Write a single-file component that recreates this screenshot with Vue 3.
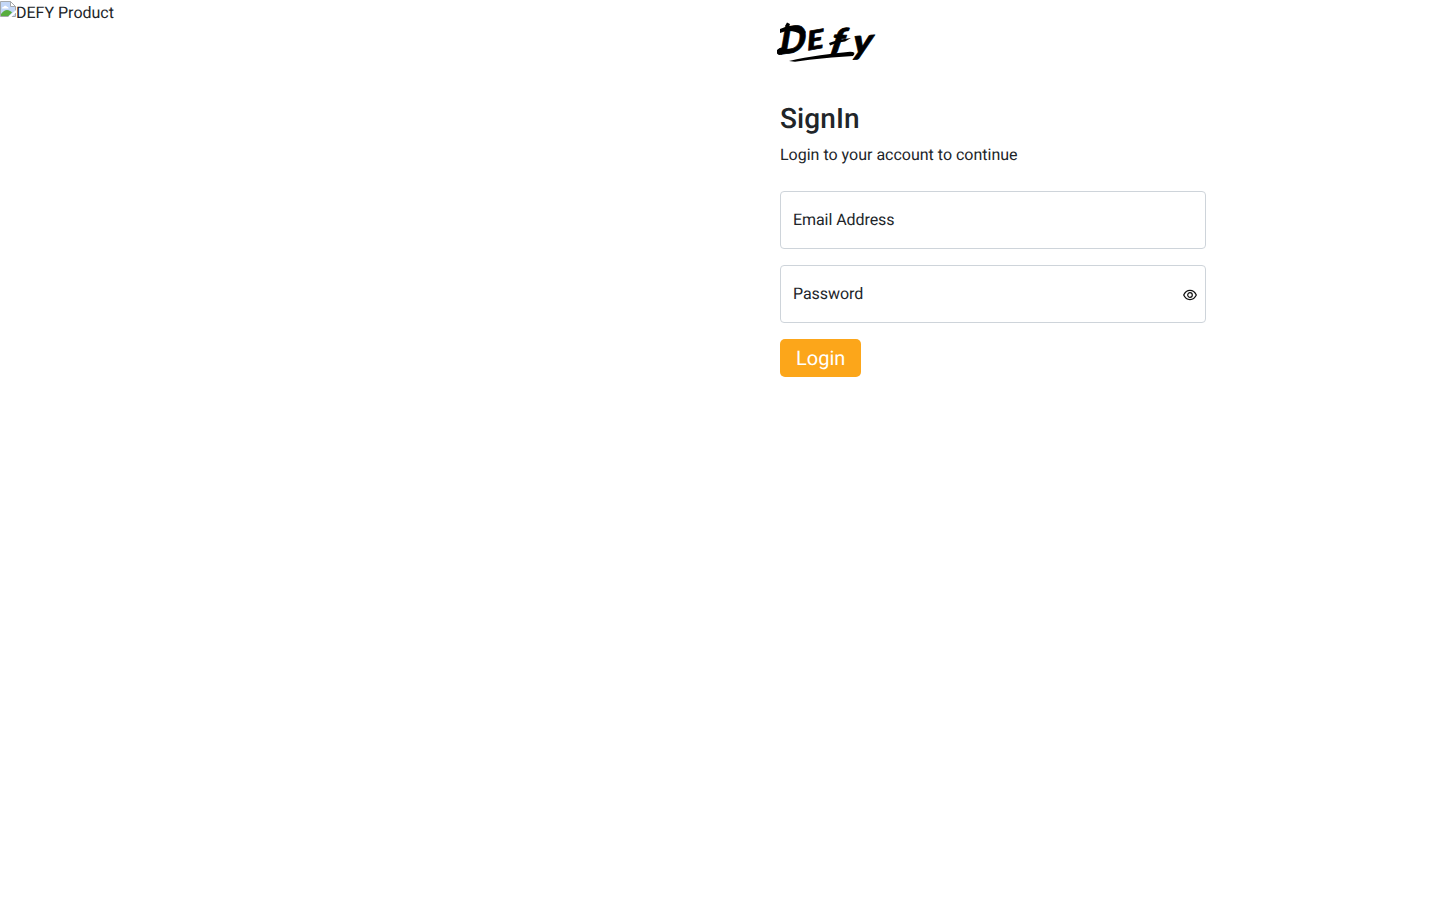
<script setup>
import { ref } from 'vue'

const email = ref('')
const password = ref('')
const visible = ref(false)
</script>

<template>
  <main class="page">
    <section class="product">
      <svg class="picture" width="16" height="16" viewBox="0 0 16 16" aria-hidden="true">
        <path d="M.5 15.5V.5h10l5 5v10z" fill="#c3d7f7" stroke="#a5a8ab" />
        <path d="M2 7.500c0-1.200 1-1.800 1.800-1.600C4.100 4.500 6.500 4.300 7 6c1.200-.1 1.600.6 1.600 1.500z" fill="#fff" />
        <path d="M1 15v-2c2-2.500 4-4 6-4s4.500 1.500 5 2.500L8.500 15z" fill="#58ad3e" />
        <path d="M8 16l8-7v2.500L11.500 16z" fill="#fff" />
        <path d="M10.500.5v5h5z" fill="#fff" stroke="#a5a8ab" />
      </svg><span>DEFY Product</span>
    </section>
    <section class="panel">
      <svg class="logo" width="104" height="44" viewBox="0 0 104 44" role="img" aria-label="DEFY">
        <g class="brush">
          <text transform="translate(4.500 34.500) rotate(-7) skewX(-10) scale(1 1)" font-size="37">D</text>
          <text transform="translate(32.500 30.500) rotate(-10) skewX(-6) scale(1.220 1)" font-size="26">E</text>
          <text transform="translate(55 31.500) rotate(2) skewX(-8) scale(1.180 1)" font-size="33">f</text>
          <text transform="translate(77 34) rotate(-4) skewX(-10) scale(1.180 1)" font-size="34">y</text>
        </g>
        <path d="M14 41C34 36 57 33.500 75 31.700q7 0 3 4.300C60 37 39 39 20 41.800z" />
        <path d="M2 30q3-3.500 8-2.500l-1 5q-4 4.500-7 1zM5 9Q18 2.500 31 12L27 15Q16 8 5 13zM10 6l2-3.500 3 1.500-2 6z" />
        <path d="M54 23q8-3.500 22-5l-6 3.500q-8 .5-15 4z" />
      </svg>
      <h1>SignIn</h1>
      <p>Login to your account to continue</p>
      <form @submit.prevent>
        <label class="field">
          <input v-model="email" type="email" autocomplete="off">
          <span v-if="!email">Email Address</span>
        </label>
        <label class="field">
          <input v-model="password" :type="visible ? 'text' : 'password'" autocomplete="off">
          <span v-if="!password">Password</span>
          <button class="eye" type="button" aria-label="Toggle password" @click="visible = !visible">
            <svg width="14" height="12" viewBox="0 0 14 12" fill="none" stroke="#111" stroke-width="1.200">
              <path d="M.7 6C3.500-.1 10.500-.1 13.300 6 10.500 12.100 3.500 12.100.7 6z" />
              <circle cx="7" cy="6" r="2.300" />
            </svg>
          </button>
        </label>
        <button class="login" type="submit">Login</button>
      </form>
    </section>
  </main>
</template>

<style>
body { margin: 0; background: #fff; }
</style>

<style scoped>
* { box-sizing: border-box; }
.page {
  display: grid;
  grid-template-columns: 1fr 1fr;
  min-height: 900px;
  color: #212529;
  font: 400 16px/24px Roboto, sans-serif;
  text-rendering: geometricPrecision;
}
.product { display: flex; align-items: flex-start; }
.product span { padding-top: 1px; }
.picture { margin-top: 1px; }
.panel { padding: 20px 60px; }
.logo { display: block; margin-left: -5px; fill: #000; overflow: visible; }
.brush {
  font-family: Lato, sans-serif;
  font-weight: 900;
  font-style: italic;
  stroke: #000;
  stroke-width: .7px;
  stroke-linejoin: round;
}
h1 { margin: 38px 0 7px; font-size: 28px; line-height: 34px; font-weight: 500; letter-spacing: .12px; }
p { margin: 0 0 24px; }
form { width: 426px; }
.field { position: relative; display: flex; height: 58px; margin-bottom: 16px; }
.field input {
  width: 100%;
  padding: 16px 12px;
  border: 1px solid #ced4da;
  border-radius: 4px;
  outline: 0;
  background: #fff;
  color: #212529;
  font: inherit;
}
.field span { position: absolute; top: 17px; left: 13px; letter-spacing: -.07px; }
.eye {
  position: absolute;
  top: 24px;
  right: 9px;
  display: flex;
  padding: 0;
  border: 0;
  background: transparent;
}
.login {
  display: block;
  height: 38px;
  padding: 0 16px;
  border: 0;
  border-radius: 5px;
  background: #fca61a;
  color: #fff;
  font: 400 20px/38px Roboto, sans-serif;
  text-rendering: geometricPrecision;
}
</style>
